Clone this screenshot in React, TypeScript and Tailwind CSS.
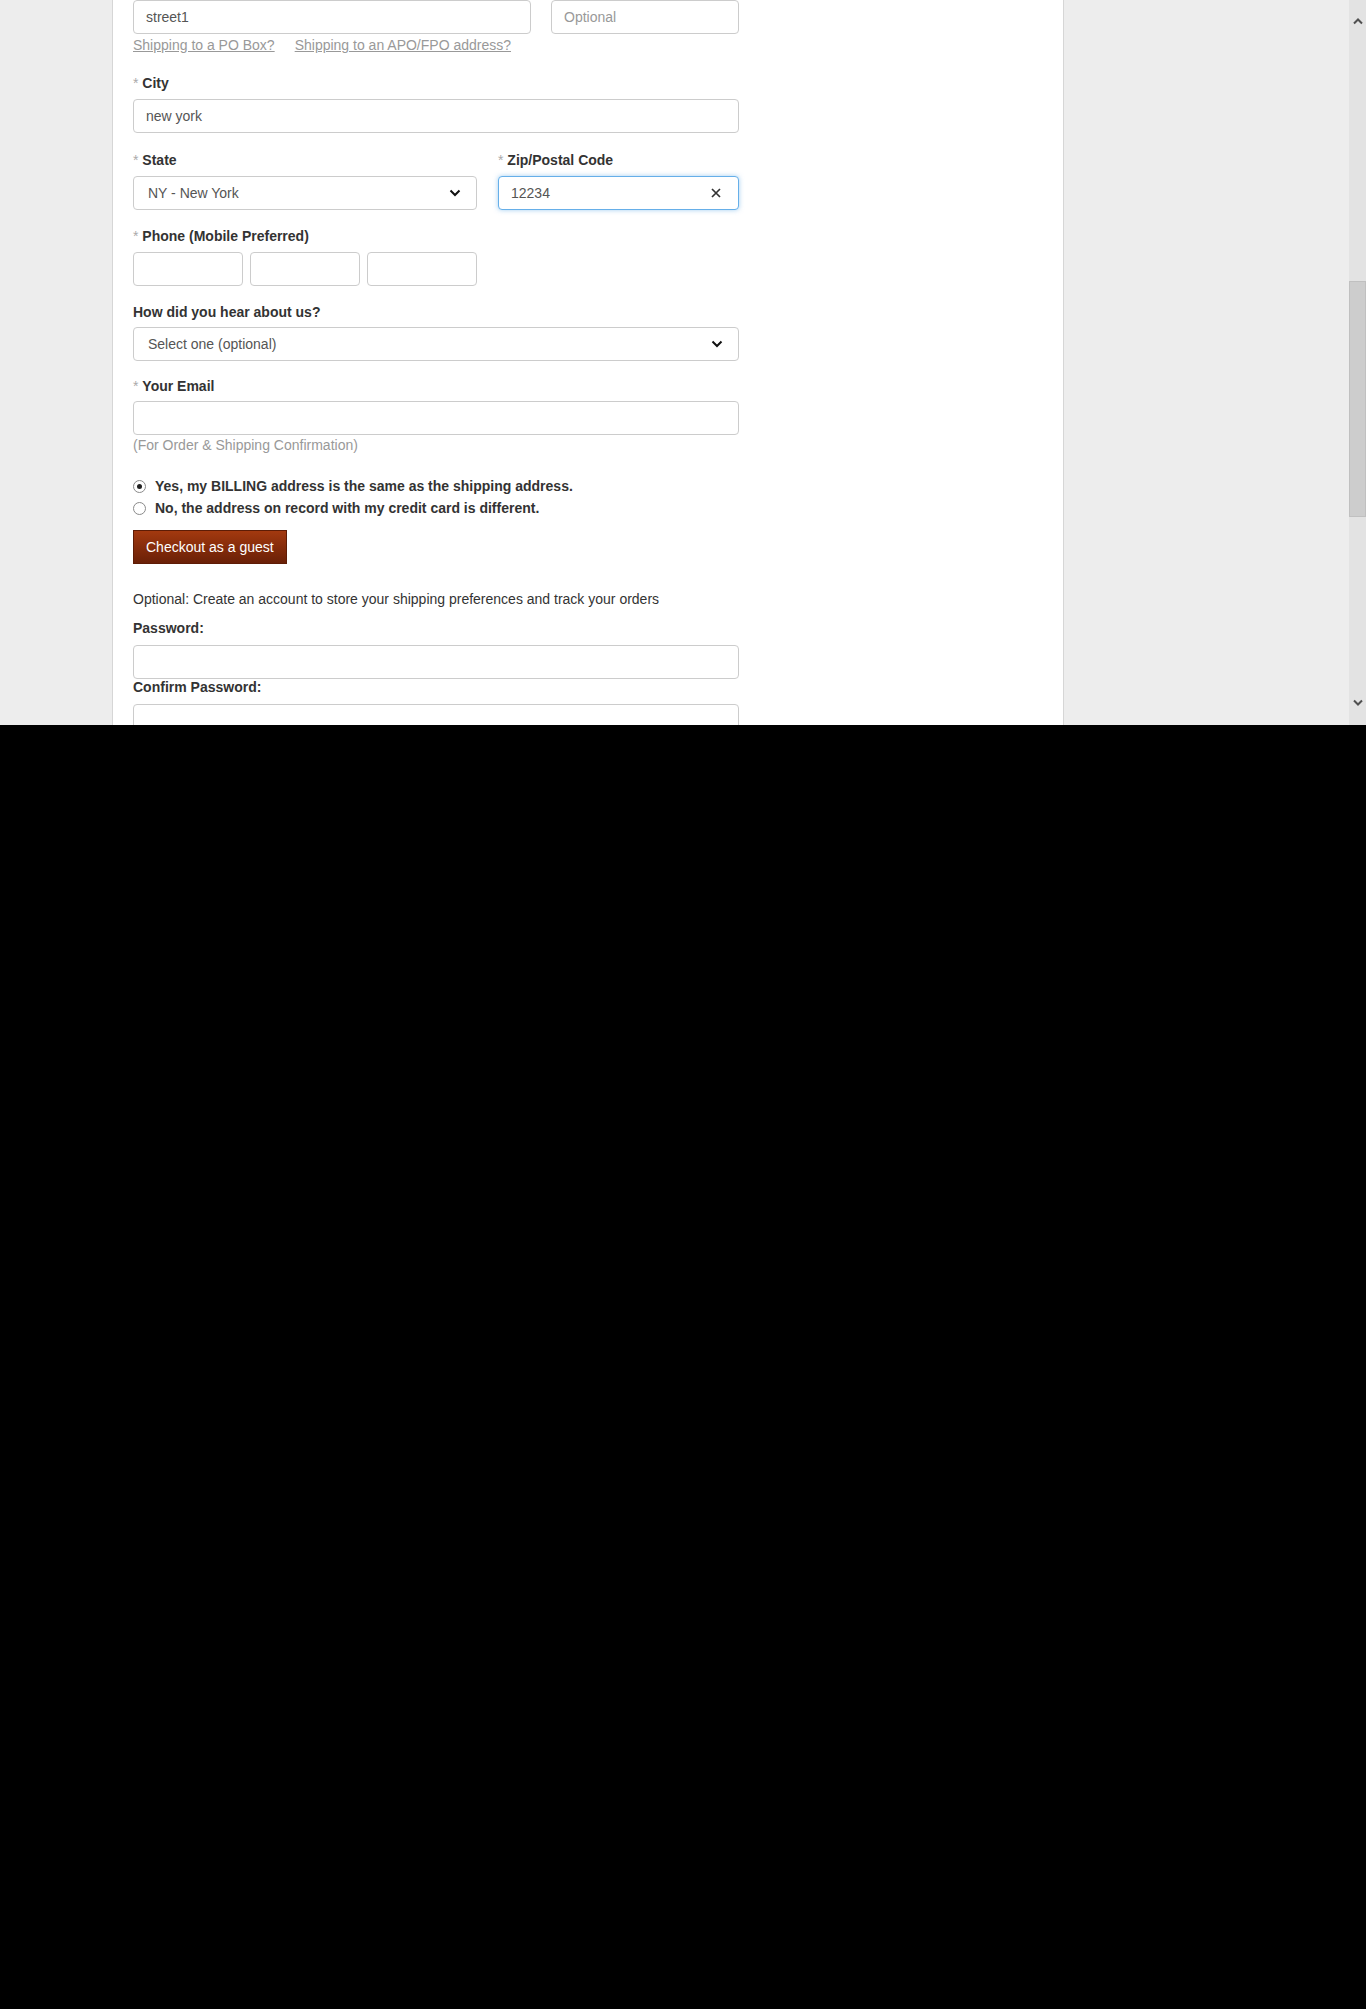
import React from "react";

function Label({ text, required }: { text: string; required?: boolean }) {
  return (
    <div className="leading-[18px] text-[14px] font-bold text-[#333]">
      {required && <span className="font-normal text-[#aaa]">* </span>}
      {text}
    </div>
  );
}

function TextInput({
  value,
  placeholder,
  className = "",
}: {
  value?: string;
  placeholder?: string;
  className?: string;
}) {
  return (
    <input
      readOnly
      value={value ?? ""}
      placeholder={placeholder}
      className={`h-[34px] rounded-[4px] border border-[#ccc] bg-white px-[12px] text-[14px] text-[#555] placeholder:text-[#999] outline-none ${className}`}
    />
  );
}

function Chevron() {
  return (
    <svg width="12" height="8" viewBox="0 0 12 8" fill="none">
      <path d="M1.5 1.5L6 6l4.5-4.5" stroke="#111" strokeWidth="2" />
    </svg>
  );
}

function FakeSelect({ text, className = "" }: { text: string; className?: string }) {
  return (
    <div
      className={`flex h-[34px] items-center justify-between rounded-[4px] border border-[#ccc] bg-white pl-[14px] pr-[15px] text-[14px] text-[#555] ${className}`}
    >
      <span>{text}</span>
      <Chevron />
    </div>
  );
}

function Radio({ checked, text }: { checked?: boolean; text: string }) {
  return (
    <div className="flex h-[20px] items-center text-[14px] font-bold text-[#333]">
      <span className="flex h-[13px] w-[13px] items-center justify-center rounded-full border border-[#8a8a8a] bg-white">
        {checked && <span className="h-[5px] w-[5px] rounded-full bg-[#222]" />}
      </span>
      <span className="ml-[9px]">{text}</span>
    </div>
  );
}

function ScrollArrow({ up }: { up?: boolean }) {
  return (
    <div className="flex h-[17px] items-center justify-center">
      <svg width="10" height="7" viewBox="0 0 10 7" fill="none">
        <path
          d={up ? "M1 5.5L5 1.5l4 4" : "M1 1.5L5 5.5l4-4"}
          stroke="#505050"
          strokeWidth="2"
        />
      </svg>
    </div>
  );
}

export default function App() {
  return (
    <div className="h-[2009px] w-[1366px] bg-black font-['Liberation_Sans',Arial,sans-serif]">
      <div className="flex h-[725px] overflow-hidden bg-[#ededed]">
        <div className="flex-1 overflow-hidden">
          <div className="ml-[112px] h-full w-[952px] border-x border-[#d6d6d6] bg-white pl-[20px]">
            <div className="w-[606px]">
              {/* street */}
              <div className="flex gap-[20px]">
                <TextInput value="street1" className="w-[398px]" />
                <TextInput placeholder="Optional" className="w-[188px]" />
              </div>
              <div className="mt-[2px] flex gap-[20px] leading-[18px] text-[14px] text-[#999] underline">
                <span>Shipping to a PO Box?</span>
                <span>Shipping to an APO/FPO address?</span>
              </div>

              {/* city */}
              <div className="mt-[20px]">
                <Label text="City" required />
              </div>
              <TextInput value="new york" className="mt-[7px] w-full" />

              {/* state / zip */}
              <div className="mt-[18px] flex gap-[21px]">
                <div className="w-[344px]">
                  <Label text="State" required />
                  <FakeSelect text="NY - New York" className="mt-[7px]" />
                </div>
                <div className="w-[241px]">
                  <Label text="Zip/Postal Code" required />
                  <div className="mt-[7px] flex h-[34px] items-center justify-between rounded-[4px] border border-[#66afe9] bg-white pl-[12px] pr-[17px] text-[14px] text-[#555] shadow-[0_0_5px_rgba(102,175,233,0.6)]">
                    <span>12234</span>
                    <svg width="10" height="10" viewBox="0 0 10 10" fill="none">
                      <path d="M1 1l8 8M9 1L1 9" stroke="#333" strokeWidth="1.7" />
                    </svg>
                  </div>
                </div>
              </div>

              {/* phone */}
              <div className="mt-[17px]">
                <Label text="Phone (Mobile Preferred)" required />
              </div>
              <div className="mt-[7px] flex gap-[7px]">
                <TextInput className="w-[110px]" />
                <TextInput className="w-[110px]" />
                <TextInput className="w-[110px]" />
              </div>

              {/* hear about */}
              <div className="mt-[17px]">
                <Label text="How did you hear about us?" />
              </div>
              <FakeSelect text="Select one (optional)" className="mt-[6px]" />

              {/* email */}
              <div className="mt-[16px]">
                <Label text="Your Email" required />
              </div>
              <TextInput className="mt-[6px] w-full" />
              <div className="mt-[1px] leading-[18px] text-[14px] text-[#999]">
                (For Order &amp; Shipping Confirmation)
              </div>

              {/* billing */}
              <div className="mt-[22px]">
                <Radio checked text="Yes, my BILLING address is the same as the shipping address." />
              </div>
              <div className="mt-[2px]">
                <Radio text="No, the address on record with my credit card is different." />
              </div>

              <button className="mt-[12px] h-[34px] border border-[#5e1c05] bg-gradient-to-b from-[#a3390f] to-[#6a2007] px-[12px] text-[14px] text-white">
                Checkout as a guest
              </button>

              {/* account */}
              <div className="mt-[26px] leading-[18px] text-[14px] text-[#333]">
                Optional: Create an account to store your shipping preferences and track your orders
              </div>
              <div className="mt-[11px]">
                <Label text="Password:" />
              </div>
              <TextInput className="mt-[8px] w-full" />
              <div className="-mt-px">
                <Label text="Confirm Password:" />
              </div>
              <TextInput className="mt-[8px] w-full" />
            </div>
          </div>
        </div>

        {/* scrollbar */}
        <div className="flex w-[17px] flex-col bg-[#e3e3e3]">
          <div className="mt-[13px]">
            <ScrollArrow up />
          </div>
          <div className="mt-[251px] h-[236px] border border-[#c0c0c0] bg-[#cdcdcd]" />
          <div className="flex-1" />
          <div className="mb-[14px]">
            <ScrollArrow />
          </div>
        </div>
      </div>
    </div>
  );
}
